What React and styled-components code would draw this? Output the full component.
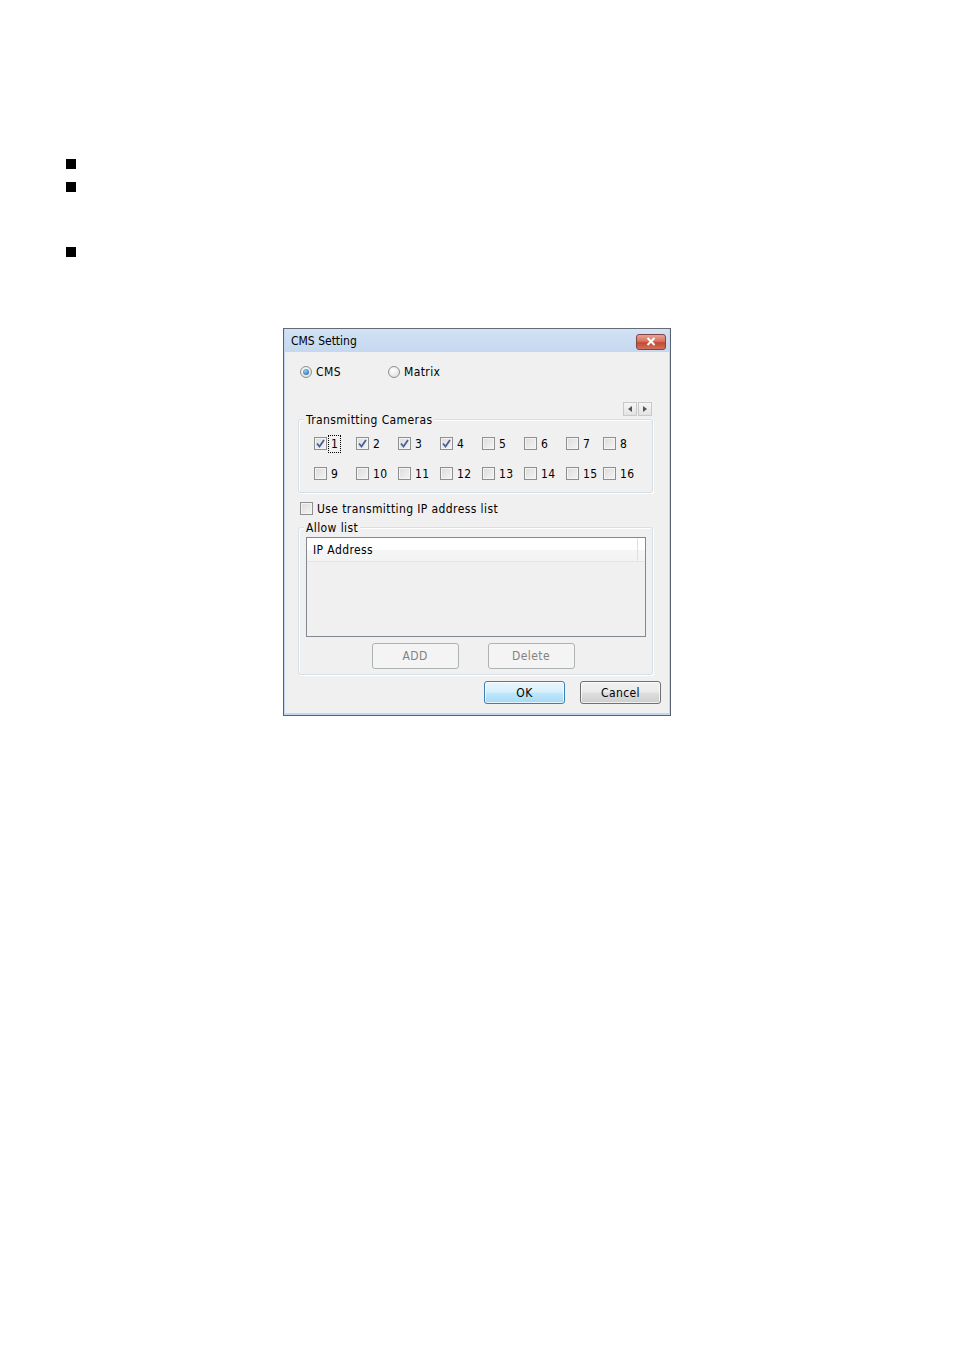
import styled, { createGlobalStyle } from "styled-components";

const GlobalStyle = createGlobalStyle`
  html, body {
    margin: 0;
    padding: 0;
    background: #fff;
  }
  body {
    font-family: "DejaVu Sans Condensed", "DejaVu Sans", sans-serif;
    font-size: 12px;
    letter-spacing: 0.4px;
    color: #000;
  }
`;

const Page = styled.div`
  width: 954px;
  height: 1354px;
  padding-top: 159px;
  box-sizing: border-box;
`;

const Bullets = styled.ul`
  list-style: none;
  margin: 0;
  padding: 0 0 0 66px;
`;

const Bullet = styled.li`
  width: 10px;
  height: 10px;
  background: #000;
  margin-top: ${(p) => p.$gap || 0}px;
`;

const Dialog = styled.div`
  margin: 71px 0 0 283px;
  width: 388px;
  height: 388px;
  box-sizing: border-box;
  border: 1px solid #5a6470;
  border-top-color: #646b73;
  background: #c2d7ef;
  display: flex;
  flex-direction: column;
  padding: 0 1px 2px 1px;
`;

const TitleBar = styled.div`
  height: 23px;
  display: flex;
  align-items: center;
  justify-content: space-between;
  padding: 1px 3px 0 6px;
  box-sizing: border-box;
  background: linear-gradient(#d3e2f4, #c5d8ef);
  font-size: 12px;
  letter-spacing: 0;
`;

const CloseButton = styled.div`
  width: 30px;
  height: 16px;
  box-sizing: border-box;
  border: 1px solid #7d4545;
  border-radius: 3px;
  background: linear-gradient(#e8a493 0%, #d5735f 45%, #c24a34 55%, #d1715a 100%);
  display: flex;
  align-items: center;
  justify-content: center;
  margin-top: 1px;
`;

const Body = styled.div`
  flex: 1;
  background: #f0f0f0;
  display: flex;
  flex-direction: column;
  padding-top: 14px;
`;

const RadioRow = styled.div`
  display: flex;
  height: 12px;
  align-items: center;
  padding-left: 15px;
`;

const RadioItem = styled.label`
  display: flex;
  align-items: center;
  gap: 4px;
  width: ${(p) => p.$width || "auto"};
`;

const RadioDot = styled.span`
  width: 12px;
  height: 12px;
  box-sizing: border-box;
  border-radius: 50%;
  border: 1px solid #8e8f8f;
  background: radial-gradient(circle at 40% 35%, #ffffff, #d8d8d8);
  display: flex;
  align-items: center;
  justify-content: center;
  &::after {
    content: "";
    display: ${(p) => (p.$on ? "block" : "none")};
    width: 6px;
    height: 6px;
    border-radius: 50%;
    background: radial-gradient(circle at 40% 35%, #8ed0f3, #1c5a93);
  }
`;

const ArrowRow = styled.div`
  display: flex;
  justify-content: flex-end;
  padding-right: 17px;
  margin-top: 24px;
  height: 14px;
`;

const ArrowButton = styled.span`
  width: 14px;
  height: 14px;
  box-sizing: border-box;
  border: 1px solid #c9c9c9;
  background: linear-gradient(#f6f6f6, #e3e3e3);
  display: flex;
  align-items: center;
  justify-content: center;
  & + & {
    margin-left: 1px;
  }
`;

const Group = styled.div`
  position: relative;
  margin: ${(p) => p.$top}px 16px 0 13px;
  border: 1px solid #d5dfe5;
  border-radius: 3px;
  box-shadow: inset 1px 1px 0 #fff, 1px 1px 0 #fff;
  padding: ${(p) => p.$pad};
`;

const Legend = styled.span`
  position: absolute;
  top: -7px;
  left: 5px;
  padding: 0 2px;
  background: #f0f0f0;
  line-height: 14px;
`;

const CameraGrid = styled.div`
  display: grid;
  grid-template-columns: repeat(6, 42px) 37px auto;
  row-gap: 17px;
`;

const CheckItem = styled.label`
  display: flex;
  align-items: center;
  gap: 3px;
  height: 13px;
`;

const Box = styled.span`
  width: 13px;
  height: 13px;
  box-sizing: border-box;
  border: 1px solid #8e8f8f;
  background: linear-gradient(135deg, #dcdcdc, #f4f4f4);
  box-shadow: inset 0 0 0 1px #f4f4f4;
  display: flex;
  align-items: center;
  justify-content: center;
`;

const CheckText = styled.span`
  line-height: 14px;
  padding: 0 1px;
  outline: ${(p) => (p.$focus ? "1px dotted #000" : "none")};
  outline-offset: 1px;
`;

const UseRow = styled.div`
  margin: 9px 0 0 15px;
`;

const ListView = styled.div`
  height: 100px;
  box-sizing: border-box;
  border: 1px solid #828790;
  background: #f0f0f0;
`;

const ListHeader = styled.div`
  height: 23px;
  display: flex;
  background: linear-gradient(#ffffff 0%, #ffffff 50%, #f5f6f7 51%, #f3f3f3 100%);
  border-bottom: 1px solid #e5e5e5;
`;

const HeaderCell = styled.div`
  width: ${(p) => p.$width};
  display: flex;
  align-items: center;
  padding-left: 6px;
  box-sizing: border-box;
  border-right: 1px solid #e0e0e0;
`;

const ButtonRow = styled.div`
  display: flex;
  justify-content: ${(p) => p.$justify || "center"};
  gap: ${(p) => p.$gap}px;
  margin-top: ${(p) => p.$top}px;
  padding: ${(p) => p.$pad || 0};
`;

const Button = styled.div`
  width: ${(p) => p.$width}px;
  height: ${(p) => p.$height}px;
  box-sizing: border-box;
  border-radius: 3px;
  display: flex;
  align-items: center;
  justify-content: center;
  border: 1px solid ${(p) => (p.$variant === "primary" ? "#3c7fb1" : p.$variant === "disabled" ? "#adb2b5" : "#707070")};
  color: ${(p) => (p.$variant === "disabled" ? "#838383" : "#000")};
  background: ${(p) =>
    p.$variant === "primary"
      ? "linear-gradient(#eaf6fd 0%, #d9f0fc 45%, #bee6fd 55%, #a7d9f5 100%)"
      : p.$variant === "disabled"
      ? "#f4f4f4"
      : "linear-gradient(#f2f2f2 0%, #ebebeb 45%, #dddddd 55%, #cfcfcf 100%)"};
  box-shadow: inset 0 0 0 1px ${(p) => (p.$variant === "disabled" ? "#f4f4f4" : "rgba(255,255,255,0.7)")};
`;

const Check = () => (
  <svg width="9" height="9" viewBox="0 0 9 9">
    <path d="M1 4.5 L3.5 7.5 L8 1" fill="none" stroke="#4a5f97" strokeWidth="1.8" />
  </svg>
);

const CheckBox = ({ checked, label, focus }) => (
  <CheckItem>
    <Box>{checked && <Check />}</Box>
    {label && <CheckText $focus={focus}>{label}</CheckText>}
  </CheckItem>
);

const cameras = Array.from({ length: 16 }, (_, i) => i + 1);

export default function App() {
  return (
    <>
      <GlobalStyle />
      <Page>
        <Bullets>
          <Bullet />
          <Bullet $gap={13} />
          <Bullet $gap={55} />
        </Bullets>
        <Dialog>
          <TitleBar>
            <span>CMS Setting</span>
            <CloseButton>
              <svg width="10" height="9" viewBox="0 0 10 9">
                <path d="M1.5 1 L8.5 8 M8.5 1 L1.5 8" stroke="#fff" strokeWidth="2" />
              </svg>
            </CloseButton>
          </TitleBar>
          <Body>
            <RadioRow>
              <RadioItem $width="88px">
                <RadioDot $on />
                CMS
              </RadioItem>
              <RadioItem>
                <RadioDot />
                Matrix
              </RadioItem>
            </RadioRow>
            <ArrowRow>
              <ArrowButton>
                <svg width="4" height="6" viewBox="0 0 4 6">
                  <path d="M4 0 L0 3 L4 6 Z" fill="#555" />
                </svg>
              </ArrowButton>
              <ArrowButton>
                <svg width="4" height="6" viewBox="0 0 4 6">
                  <path d="M0 0 L4 3 L0 6 Z" fill="#555" />
                </svg>
              </ArrowButton>
            </ArrowRow>
            <Group $top={3} $pad="17px 0 12px 15px">
              <Legend>Transmitting Cameras</Legend>
              <CameraGrid>
                {cameras.map((n) => (
                  <CheckBox key={n} checked={n <= 4} focus={n === 1} label={String(n)} />
                ))}
              </CameraGrid>
            </Group>
            <UseRow>
              <CheckBox label="Use transmitting IP address list" />
            </UseRow>
            <Group $top={12} $pad="9px 6px 5px 7px">
              <Legend>Allow list</Legend>
              <ListView>
                <ListHeader>
                  <HeaderCell $width="331px">IP Address</HeaderCell>
                </ListHeader>
              </ListView>
              <ButtonRow $gap={29} $top={6} $pad="0 6px 0 0">
                <Button $variant="disabled" $width={87} $height={26}>
                  ADD
                </Button>
                <Button $variant="disabled" $width={87} $height={26}>
                  Delete
                </Button>
              </ButtonRow>
            </Group>
            <ButtonRow $justify="flex-end" $gap={15} $top={6} $pad="0 8px 0 0">
              <Button $variant="primary" $width={81} $height={23}>
                OK
              </Button>
              <Button $width={81} $height={23}>
                Cancel
              </Button>
            </ButtonRow>
          </Body>
        </Dialog>
      </Page>
    </>
  );
}
